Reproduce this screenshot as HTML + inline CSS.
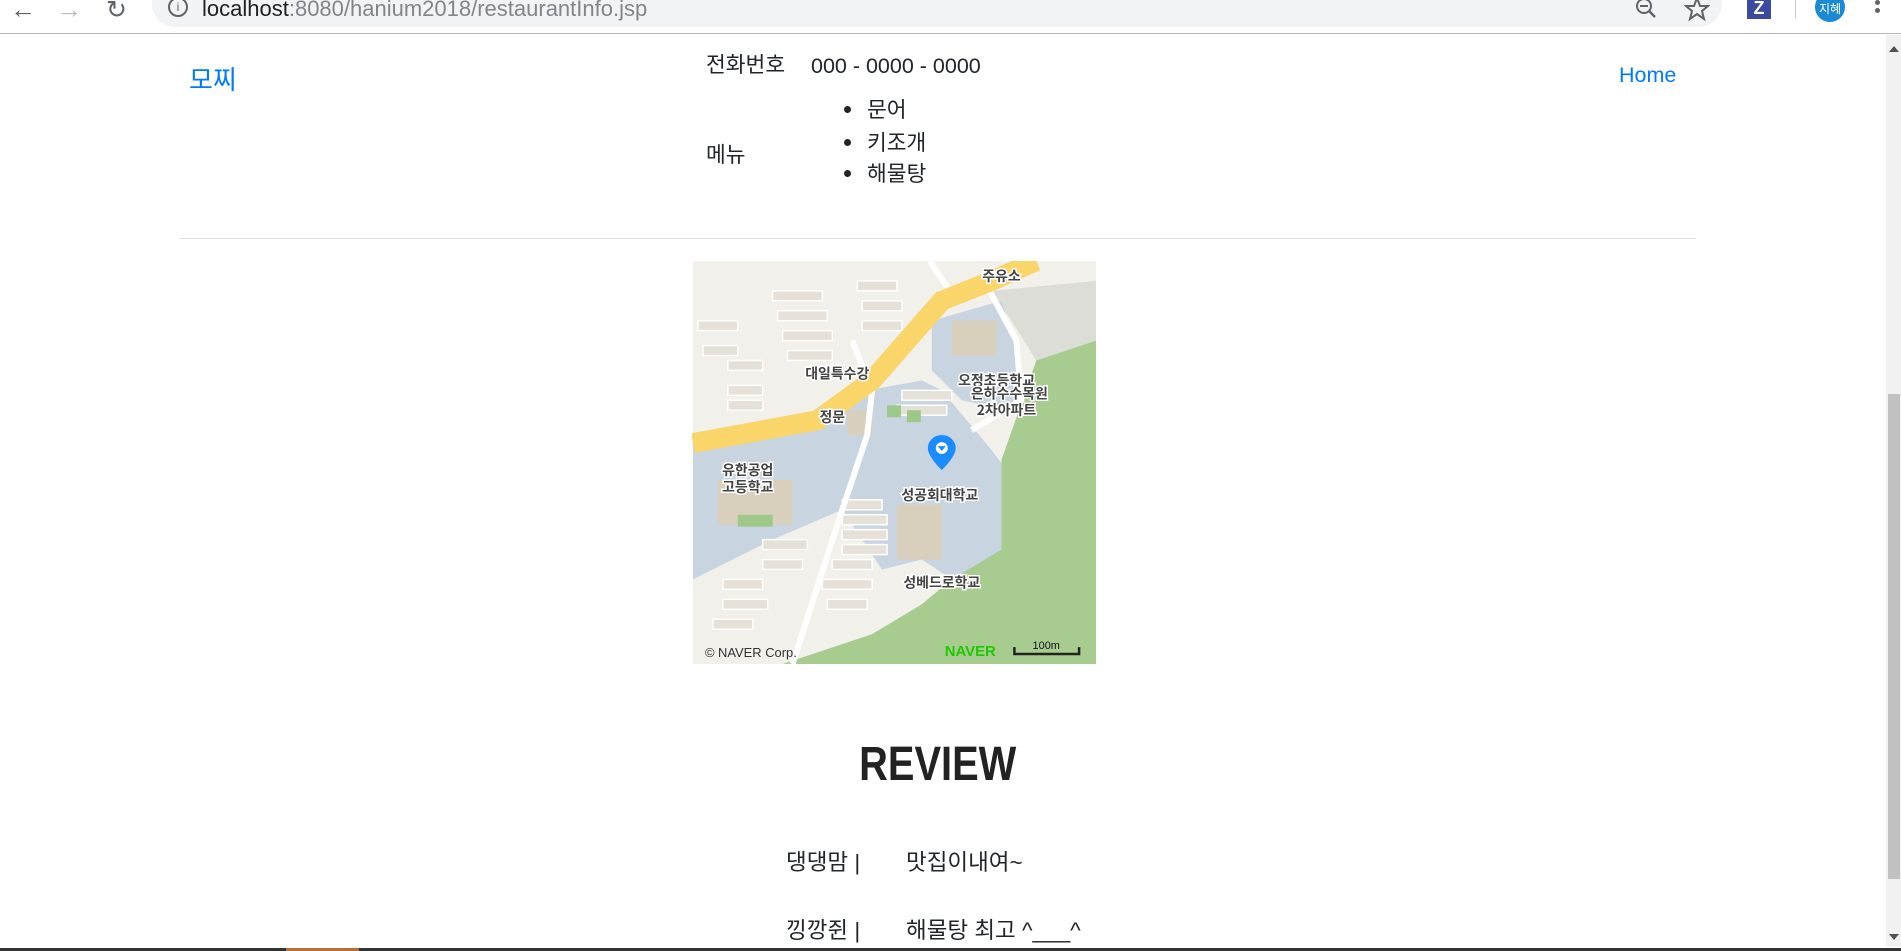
<!DOCTYPE html>
<html><head><meta charset="utf-8"><style>
*{margin:0;padding:0;box-sizing:border-box}
body{width:1901px;height:951px;overflow:hidden;background:#fff;position:relative;font-family:"Liberation Sans","Noto Sans CJK KR",sans-serif;color:#212529}
.a{position:absolute;white-space:nowrap}
.t{font-size:21.5px;line-height:1}
</style></head><body>
<!-- chrome -->
<div class="a" style="left:0;top:0;width:1901px;height:34px;background:#fff;border-bottom:1px solid #b4b4b4"></div>
<div class="a" style="left:152px;top:-20px;width:1570px;height:47px;background:#f1f3f4;border-radius:24px"></div>
<div class="a" style="left:10px;top:-6px;font-size:26px;color:#5f6368">←</div>
<div class="a" style="left:56px;top:-6px;font-size:26px;color:#bbb">→</div>
<div class="a" style="left:106px;top:-5px;font-size:25px;color:#5f6368">↻</div>
<div class="a" style="left:168px;top:-3px;width:20px;height:20px;border:2px solid #5f6368;border-radius:50%;font-size:12px;text-align:center;line-height:16px;color:#5f6368">i</div>
<div class="a" style="left:202px;top:-4px;font-size:22px;color:#202124">localhost<span style="color:#80868b">:8080/hanium2018/restaurantInfo.jsp</span></div>
<svg class="a" style="left:1630px;top:0" width="40" height="22"><circle cx="14" cy="6" r="7" fill="none" stroke="#5f6368" stroke-width="2"/><line x1="10" y1="6" x2="18" y2="6" stroke="#5f6368" stroke-width="2"/><line x1="19" y1="11" x2="25" y2="17" stroke="#5f6368" stroke-width="2.5"/></svg>
<svg class="a" style="left:1684px;top:0" width="26" height="22"><polygon points="13,-2 16,6 24,6 18,11 20,19 13,14 6,19 8,11 2,6 10,6" fill="none" stroke="#5f6368" stroke-width="2"/></svg>
<div class="a" style="left:1747px;top:0;width:24px;height:19px;background:#3c4ba0;color:#fff;font-weight:bold;font-size:18px;text-align:center;line-height:17px">Z</div>
<div class="a" style="left:1795px;top:0;width:1px;height:18px;background:#ccc"></div>
<div class="a" style="left:1815px;top:-8px;width:30px;height:30px;border-radius:50%;background:#1a8ad6;color:#fff;font-size:12px;text-align:center;line-height:34px">지혜</div>
<div class="a" style="left:1875px;top:0;width:5px;line-height:0"><div style="width:5px;height:5px;border-radius:50%;background:#5f6368;margin-bottom:3px"></div><div style="width:5px;height:5px;border-radius:50%;background:#5f6368"></div></div>
<!-- scrollbar -->
<div class="a" style="left:1886px;top:35px;width:15px;height:912px;background:#f1f1f1"></div>
<div class="a" style="left:1888px;top:394px;width:12px;height:485px;background:#c1c1c1"></div>
<div class="a" style="left:1889px;top:46px;width:0;height:0;border-left:5px solid transparent;border-right:5px solid transparent;border-bottom:6px solid #505050"></div>
<div class="a" style="left:1889px;top:934px;width:0;height:0;border-left:5px solid transparent;border-right:5px solid transparent;border-top:6px solid #505050"></div>
<!-- header -->
<div class="a" style="left:189px;top:60px;font-size:26px;color:#007bff">모찌</div>
<div class="a" style="left:1619px;top:63px;font-size:21.5px;color:#007bff">Home</div>
<div class="a t" style="left:706px;top:55px">전화번호</div>
<div class="a t" style="left:811px;top:56px">000 - 0000 - 0000</div>
<div class="a t" style="left:706px;top:145px">메뉴</div>
<div class="a t" style="left:867px;top:100px">문어</div>
<div class="a t" style="left:867px;top:133px">키조개</div>
<div class="a t" style="left:867px;top:164px">해물탕</div>
<div class="a" style="left:844px;top:106px;width:7px;height:7px;border-radius:50%;background:#212529"></div>
<div class="a" style="left:844px;top:139px;width:7px;height:7px;border-radius:50%;background:#212529"></div>
<div class="a" style="left:844px;top:170px;width:7px;height:7px;border-radius:50%;background:#212529"></div>
<div class="a" style="left:179px;top:238px;width:1517px;height:1px;background:#e2e2e2"></div>
<!-- map -->
<svg class="a" style="left:692px;top:261px" width="405" height="403" viewBox="0 0 405 405">
<rect width="405" height="405" fill="#f2f0ea"/>
<polygon points="300,30 405,20 405,80 345,100 320,60" fill="#dcddd6"/>
<polygon points="0,180 120,160 175,130 230,120 250,130 300,190 330,230 325,320 260,320 230,300 190,310 150,250 80,280 0,320" fill="#c9d4e1"/>
<polygon points="240,60 310,40 330,100 320,150 270,140 240,110" fill="#c9d4e1"/>
<polygon points="345,100 405,80 405,405 90,405 180,375 230,345 260,320 310,290 310,200" fill="#a8cc90"/>
<g fill="#e6e1d8" stroke="#fff" stroke-width="1.5">
<rect x="5" y="60" width="40" height="10"/><rect x="10" y="85" width="35" height="10"/><rect x="35" y="100" width="35" height="10"/><rect x="35" y="125" width="35" height="10"/><rect x="35" y="140" width="35" height="10"/>
<rect x="80" y="30" width="50" height="10"/><rect x="85" y="50" width="50" height="10"/><rect x="90" y="70" width="50" height="10"/><rect x="95" y="90" width="45" height="10"/>
<rect x="165" y="20" width="40" height="10"/><rect x="170" y="40" width="40" height="10"/><rect x="170" y="60" width="40" height="10"/>
<rect x="210" y="130" width="50" height="10"/><rect x="205" y="145" width="50" height="10"/>
<rect x="150" y="240" width="40" height="10"/><rect x="150" y="255" width="45" height="10"/><rect x="150" y="270" width="45" height="10"/><rect x="150" y="285" width="45" height="10"/>
<rect x="70" y="280" width="45" height="10"/><rect x="70" y="300" width="40" height="10"/><rect x="30" y="320" width="40" height="10"/><rect x="30" y="340" width="45" height="10"/><rect x="20" y="360" width="40" height="10"/><rect x="140" y="300" width="40" height="10"/><rect x="130" y="320" width="50" height="10"/><rect x="135" y="340" width="40" height="10"/>
</g>
<rect x="25" y="220" width="75" height="45" fill="#d9cfbd"/>
<rect x="205" y="245" width="45" height="55" fill="#d9cfbd"/>
<rect x="260" y="60" width="45" height="35" fill="#d9cfbd"/>
<rect x="155" y="150" width="25" height="25" fill="#d9cfbd"/>
<rect x="195" y="145" width="14" height="12" fill="#9ec88a"/><rect x="215" y="150" width="14" height="12" fill="#9ec88a"/><rect x="45" y="255" width="35" height="12" fill="#9ec88a"/>
<g fill="none" stroke="#fff" stroke-width="6"><polyline points="160,80 180,130 175,175 150,250 100,405"/><polyline points="238,0 258,30"/><polyline points="298,30 325,80 330,140 280,170"/></g>
<polyline points="0,183 125,160 180,120 250,40 300,20 345,0" fill="none" stroke="#f9d56a" stroke-width="20"/>
<g font-family="'Noto Sans CJK KR',sans-serif" font-size="14" font-weight="bold" fill="#444" text-anchor="middle" stroke="#fff" stroke-width="3" paint-order="stroke">
<text x="145" y="118">대일특수강</text><text x="140" y="162">정문</text>
<text x="55" y="215">유한공업</text><text x="55" y="232">고등학교</text>
<text x="305" y="125">오정초등학교</text><text x="318" y="138">은하수수목원</text><text x="315" y="155">2차아파트</text>
<text x="248" y="240">성공회대학교</text><text x="250" y="328">성베드로학교</text><text x="310" y="20">주유소</text>
</g>
<path d="M250,175 c-9,0 -14,7 -14,13 c0,9 14,22 14,22 s14,-13 14,-22 c0,-6 -5,-13 -14,-13z" fill="#1a8cff"/><circle cx="250" cy="188" r="6" fill="#fff"/><polygon points="246,186 254,186 250,191" fill="#1a8cff"/>
<text x="12" y="398" font-size="13" fill="#333" font-family="'Liberation Sans',sans-serif">© NAVER Corp.</text>
<text x="253" y="397" font-size="15" font-weight="bold" fill="#1ec800" font-family="'Liberation Sans',sans-serif">NAVER</text>
<polyline points="323,388 323,395 388,395 388,388" fill="none" stroke="#222" stroke-width="2.5"/>
<text x="355" y="390" font-size="11" fill="#111" text-anchor="middle" font-family="'Liberation Sans',sans-serif">100m</text>
</svg>
<!-- review -->
<div class="a" style="left:0;width:1875px;top:737px;text-align:center"><span style="display:inline-block;font-size:48px;font-weight:bold;color:#222;transform:scaleX(0.83)">REVIEW</span></div>
<div class="a" style="left:786px;top:845px;font-size:22.5px">댕댕맘 |</div>
<div class="a" style="left:906px;top:845px;font-size:22.5px">맛집이내여~</div>
<div class="a" style="left:786px;top:913px;font-size:22.5px">낑깡쥔 |</div>
<div class="a" style="left:906px;top:913px;font-size:22.5px">해물탕 최고 ^___^</div>
<div class="a" style="left:0;top:948px;width:1901px;height:3px;background:#333"></div>
<div class="a" style="left:286px;top:948px;width:73px;height:3px;background:#b5713a"></div>
</body></html>
